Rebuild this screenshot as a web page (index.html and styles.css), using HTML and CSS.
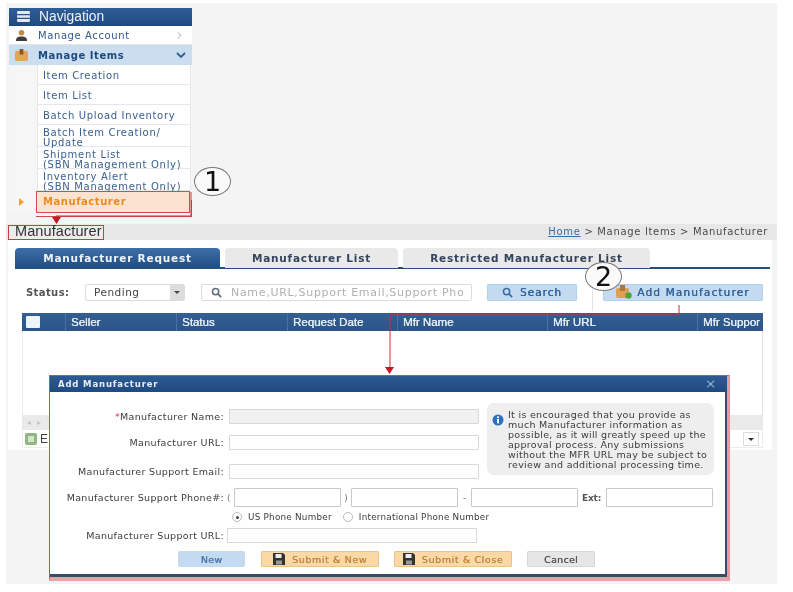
FILE: index.html
```html
<!DOCTYPE html>
<html lang="en">
<head>
<meta charset="utf-8">
<title>Add Manufacturer</title>
<link rel="stylesheet" href="styles.css">
</head>
<body>
<div class="shot">
  <nav class="nav">
    <div class="nav-head">
      <svg class="nav-ico" viewBox="0 0 14 12"><rect width="14" height="12" rx="1" fill="#dfe8f2"/><path d="M0 4h14M0 8h14" stroke="#2b5389" stroke-width="1.2"/></svg>
      <span>Navigation</span>
    </div>
    <div class="nav-top">
      <svg class="top-ico" viewBox="0 0 14 13"><circle cx="7" cy="4" r="3" fill="#c9873f"/><path d="M1 13c0-4 2-5 6-5s6 1 6 5z" fill="#3d3d3d"/></svg>
      <span>Manage Account</span><i class="chev">&#8250;</i>
    </div>
    <div class="nav-top nav-open">
      <svg class="top-ico" viewBox="0 0 14 13"><rect y="2" width="14" height="11" rx="2" fill="#e2a458"/><rect x="5" width="4" height="6" fill="#8a5a22"/></svg>
      <span>Manage Items</span>
      <svg class="chev-down" viewBox="0 0 10 6"><path d="M1 1l4 4 4-4" fill="none" stroke="#315f93" stroke-width="1.8"/></svg>
    </div>
    <ul class="sub">
      <li>Item Creation</li>
      <li>Item List</li>
      <li>Batch Upload Inventory</li>
      <li class="two">Batch Item Creation/<br>Update</li>
      <li class="two">Shipment List<br>(SBN Management Only)</li>
      <li class="two">Inventory Alert<br>(SBN Management Only)</li>
      <li class="current">Manufacturer</li>
    </ul>
  </nav>

  <header class="band">
    <span class="page-title">Manufacturer</span>
    <span class="crumbs"><a>Home</a> &gt; Manage Items &gt; Manufacturer</span>
  </header>

  <main class="panel">
    <div class="tabs">
      <div class="tab tab-on">Manufacturer Request</div>
      <div class="tab tab-list">Manufacturer List</div>
      <div class="tab tab-restricted">Restricted Manufacturer List</div>
    </div>
    <div class="tools">
      <span class="status-label">Status:</span>
      <div class="select"><span>Pending</span><b class="select-arrow"></b></div>
      <div class="search">
        <svg class="glass" viewBox="0 0 12 12"><circle cx="5" cy="5" r="3.4" fill="none" stroke="#5f6d7c" stroke-width="1.7"/><path d="M7.6 7.6L11 11" stroke="#5f6d7c" stroke-width="2"/></svg>
        <span>Name,URL,Support Email,Support Pho</span>
      </div>
      <div class="btn-blue btn-search">
        <svg class="glass" viewBox="0 0 12 12"><circle cx="5" cy="5" r="3.4" fill="none" stroke="#3a6ea5" stroke-width="1.7"/><path d="M7.6 7.6L11 11" stroke="#3a6ea5" stroke-width="2"/></svg>
        <span>Search</span>
      </div>
      <div class="tool-sep"></div>
      <div class="btn-blue btn-add">
        <svg class="add-ico" viewBox="0 0 16 14"><rect y="3" width="13" height="10" rx="2" fill="#dca156"/><rect x="4" width="5" height="6" fill="#a8763a"/><circle cx="12.5" cy="10.5" r="3.2" fill="#4fa03e"/></svg>
        <span>Add Manufacturer</span>
      </div>
    </div>
    <div class="grid">
      <div class="grid-head">
        <div class="col col-check"><b class="check"></b></div>
        <div class="col col-a">Seller</div>
        <div class="col col-a">Status</div>
        <div class="col col-b">Request Date</div>
        <div class="col col-c">Mfr Name</div>
        <div class="col col-c">Mfr URL</div>
        <div class="col col-d">Mfr Suppor</div>
      </div>
      <div class="grid-body"></div>
      <div class="grid-scroll"><span>&#9666;</span><span>&#9656;</span></div>
      <div class="grid-foot">
        <div class="export">
          <svg class="export-ico" viewBox="0 0 12 12"><rect width="12" height="12" rx="2" fill="#8fb77f"/><rect x="3" y="3" width="6" height="6" fill="#d4e4c8"/></svg>
          <span>E</span>
        </div>
        <div class="pager"><b class="pager-arrow"></b></div>
      </div>
    </div>
  </main>

  <section class="modal">
    <div class="modal-head"><span>Add Manufacturer</span><i class="close">&#215;</i></div>
    <div class="modal-body">
      <div class="fields">
        <div class="row row-name"><label class="lbl"><em>*</em>Manufacturer Name:</label><div class="inp inp-wide inp-off"></div></div>
        <div class="row row-url"><label class="lbl">Manufacturer URL:</label><div class="inp inp-wide"></div></div>
        <div class="row row-email"><label class="lbl">Manufacturer Support Email:</label><div class="inp inp-wide"></div></div>
      </div>
      <aside class="info">
        <svg class="info-ico" viewBox="0 0 12 12"><circle cx="6" cy="6" r="5.5" fill="#2f6fc0"/><rect x="5" y="5" width="2" height="4.4" fill="#fff"/><rect x="5" y="2.4" width="2" height="1.7" fill="#fff"/></svg>
        <p>It is encouraged that you provide as much Manufacturer information as possible, as it will greatly speed up the approval process. Any submissions without the MFR URL may be subject to review and additional processing time.</p>
      </aside>
      <div class="row row-phone">
        <label class="lbl">Manufacturer Support Phone#:</label>
        <span class="paren">(</span><div class="inp inp-ph"></div>
        <span class="paren gap-a">)</span><div class="inp inp-ph"></div>
        <span class="paren gap-b">-</span><div class="inp inp-ph"></div>
        <span class="ext">Ext:</span><div class="inp inp-ph"></div>
      </div>
      <div class="radios">
        <b class="radio radio-on"></b><span>US Phone Number</span>
        <b class="radio radio-second"></b><span>International Phone Number</span>
      </div>
      <div class="row row-surl"><label class="lbl">Manufacturer Support URL:</label><div class="inp inp-surl"></div></div>
      <div class="actions">
        <div class="act act-new">New</div>
        <div class="act act-orange"><svg class="disk" viewBox="0 0 12 12"><path d="M0 0h10l2 2v10H0z" fill="#333"/><rect x="2.5" y="1" width="6" height="4" fill="#eee"/><rect x="3" y="7.5" width="6" height="4" fill="#999"/></svg>Submit &amp; New</div>
        <div class="act act-orange"><svg class="disk" viewBox="0 0 12 12"><path d="M0 0h10l2 2v10H0z" fill="#333"/><rect x="2.5" y="1" width="6" height="4" fill="#eee"/><rect x="3" y="7.5" width="6" height="4" fill="#999"/></svg>Submit &amp; Close</div>
        <div class="act act-cancel">Cancel</div>
      </div>
    </div>
  </section>

  <svg class="marks" viewBox="0 0 771 581" aria-hidden="true">
    <path d="M185 189v24H50v6M673 302v10H384v54" fill="none" stroke="#c4303a" stroke-width="1"/>
    <path d="M46 214h9l-4.500 7zM379 364h9l-4.500 7z" fill="#c8171f"/>
  </svg>
  <div class="badge badge-one">1</div>
  <div class="badge badge-two">2</div>
</div>
</body>
</html>
```
FILE: styles.css
```css
* { box-sizing: border-box; }
html, body { margin: 0; padding: 0; background: #fff; }
body { width: 793px; height: 592px; overflow: hidden; font-family: "DejaVu Sans", sans-serif; font-size: 10px; color: #444; }
.shot { position: relative; width: 771px; height: 581px; margin: 3px 0 0 6px; padding-top: 5px; background: #f4f4f4; filter: blur(.6px); }

.nav { width: 183px; height: 216px; margin-left: 3px; }
.nav-head { height: 18px; display: flex; align-items: center; gap: 8px; padding: 0 0 2px 7px; background: linear-gradient(#2f5d96, #1f4a80); color: #eef2f7; font: 13.800px "Liberation Sans", sans-serif; }
.nav-ico { width: 15px; height: 11px; }
.nav-top { height: 19px; display: flex; align-items: center; padding-left: 6px; background: #fff; color: #32598c; letter-spacing: .6px; font-size: 10px; border-bottom: 1px solid #e6e6e6; }
.top-ico { width: 13px; height: 12px; margin-right: 10px; }
.chev { margin-left: auto; margin-right: 9px; color: #c8c8c8; font-size: 15px; font-style: normal; line-height: 10px; }
.nav-open { height: 20px; background: #cbdef0; color: #1e4a80; font-weight: 700; font-size: 10px; letter-spacing: .55px; border: 0; }
.chev-down { width: 10px; height: 6px; margin-left: auto; margin-right: 6px; }
.sub { list-style: none; margin: 0; padding: 0 1px 0 28px; background: #f6f6f6; }
.sub li { height: 20px; display: flex; align-items: center; padding: 2px 0 0 5px; background: #fff; color: #3a6091; letter-spacing: .65px; font-size: 10px; line-height: 10px; border: 1px solid #e4e8ec; border-width: 0 1px 1px; }
.sub li.two { display: block; height: 22px; padding-top: 2.500px; white-space: nowrap; letter-spacing: .7px; }
.sub li.current { height: 22px; margin-left: -1px; margin-right: 1px; padding: 0 0 0 6px; background: #fbe3cf; color: #ef8a1f; font-weight: 700; font-size: 10px; letter-spacing: .55px; border: 1px solid #d6494f; position: relative; }
.sub li.current::before { content: ""; position: absolute; left: -18px; top: 6px; border-left: 5px solid #f0a030; border-top: 4px solid transparent; border-bottom: 4px solid transparent; }
.sub li.current::after { content: ""; position: absolute; left: -1px; right: -3px; top: 8px; height: 16px; border: 1px solid #d6494f; border-width: 0 1px 1px 0; }

.band { height: 16px; display: flex; align-items: center; justify-content: space-between; padding-right: 9px; background: #e7e7e7; width: 771px; }
.page-title { margin-left: 2px; padding: 0 1px 0 6px; height: 15px; border: 1px solid #cf3a44; color: #333; font: 14.500px/11px "Liberation Sans", sans-serif; letter-spacing: .1px; background: #ececec; white-space: nowrap; }
.crumbs { color: #4a4a4a; letter-spacing: .67px; font-size: 10px; margin-top: -1px; }
.crumbs a { color: #3a6c9e; text-decoration: underline; }

.panel { width: 764px; height: 210px; margin-left: 2px; padding: 8px 0 0 7px; background: #fff; }
.tabs { display: flex; gap: 5px; height: 21px; width: 755px; border-bottom: 2px solid #27507f; }
.tab { height: 20px; display: flex; align-items: center; justify-content: center; border-radius: 4px 4px 0 0; background: #e9e9e9; color: #33445c; font-weight: 700; font-size: 10.500px; letter-spacing: .8px; }
.tab-on { width: 205px; background: linear-gradient(#3e6fa6, #1f4d85); color: #f0f4f8; }
.tab-list { width: 173px; }
.tab-restricted { width: 247px; }

.tools { position: relative; height: 46px; display: flex; align-items: center; padding-left: 11px; }
.status-label { width: 59px; font-weight: 700; font-size: 10px; color: #555; letter-spacing: .4px; }
.select { width: 100px; height: 17px; display: flex; align-items: center; justify-content: space-between; padding-left: 8px; border: 1px solid #dcdcdc; border-radius: 2px; font-size: 10.500px; color: #444; letter-spacing: .5px; }
.select-arrow { width: 14px; height: 100%; background: #ddd; position: relative; }
.select-arrow::after { content: ""; position: absolute; left: 4px; top: 6px; border: 3px solid transparent; border-top: 3px solid #444; }
.search { width: 271px; height: 17px; margin-left: 16px; display: flex; align-items: center; gap: 9px; padding-left: 9px; border: 1px solid #dcdcdc; border-radius: 2px; color: #b0b0b0; font-size: 11px; letter-spacing: .7px; white-space: nowrap; overflow: hidden; }
.glass { width: 11px; height: 11px; flex: none; }
.btn-blue { height: 17px; display: flex; align-items: center; justify-content: center; background: #c3daf0; border-radius: 2px; color: #30639a; font-size: 10.500px; box-shadow: inset 0 0 0 1px #b5cfe8; text-shadow: .3px 0 0 #30639a; }
.btn-search { width: 90px; margin-left: 15px; gap: 7px; letter-spacing: 1px; }
.tool-sep { width: 1px; height: 34px; margin: 4px 10px 0 15px; background: #e3e3e3; }
.btn-add { width: 160px; gap: 5px; letter-spacing: 1.150px; }
.add-ico { width: 16px; height: 14px; }

.grid { width: 741px; margin-left: 7px; margin-top: -2px; }
.grid-head { height: 18px; display: flex; background: linear-gradient(#355f93, #2b5488); color: #e4ecf4; font: 11.500px "Liberation Sans", sans-serif; text-shadow: .3px 0 0 #e4ecf4; }
.col { display: flex; align-items: center; padding-left: 5px; border-left: 1px solid #4a72a1; }
.col-check { width: 43px; border: 0; padding-left: 4px; }
.check { width: 14px; height: 12px; background: #eef3f8; border-radius: 1px; }
.col-a { width: 111px; }
.col-b { width: 110px; }
.col-c { width: 150px; }
.col-d { width: 65px; white-space: nowrap; overflow: hidden; }
.grid-body { height: 84px; border-right: 1px solid #e2e2e2; border-left: 1px solid #eee; }
.grid-scroll { height: 15px; display: flex; gap: 6px; padding-left: 5px; align-items: center; background: #eaeaea; color: #c4c4c4; font-size: 8px; }
.grid-foot { height: 18px; display: flex; justify-content: space-between; align-items: center; border: 1px solid #ececec; border-top: 0; padding-right: 3px; }
.export { display: flex; align-items: center; gap: 3px; padding-left: 2px; font: 12px "Liberation Sans", sans-serif; color: #444; }
.export-ico { width: 12px; height: 12px; }
.pager { width: 16px; height: 14px; border: 1px solid #ddd; position: relative; }
.pager-arrow { position: absolute; left: 4px; top: 5px; border: 3px solid transparent; border-top: 3px solid #333; }

.modal { position: absolute; left: 43px; top: 372px; width: 681px; height: 206px; background: #fff; border: 1px solid #cf4a52; border-right-width: 3px; border-right-color: #e89aa0; border-bottom-width: 4px; border-bottom-color: #e9a3a8; box-shadow: inset -2px -3px 0 #3b4a66; }
.modal-head { height: 16px; display: flex; align-items: center; justify-content: space-between; padding: 0 10px 0 8px; background: linear-gradient(#2d5a92, #1f4a80); color: #e8eef5; font-weight: 700; font-size: 8.500px; letter-spacing: .85px; }
.close { font-style: normal; font-size: 13px; font-weight: 400; color: #9fb6d0; line-height: 12px; }
.modal-body { position: relative; padding-top: 17px; }
.row { display: flex; align-items: center; }
.lbl { width: 174px; flex: none; text-align: right; font-size: 9.500px; color: #3c3c3c; letter-spacing: .34px; white-space: nowrap; }
.lbl em { color: #d33; font-style: normal; }
.inp { height: 15px; border: 1px solid #d8d8d8; border-radius: 1px; background: #fff; }
.inp-wide { width: 250px; margin-left: 5px; }
.inp-off { background: #f1f1f1; }
.row-url { margin-top: 11px; }
.row-email { margin-top: 14px; }
.row-phone { margin-top: 9px; }
.row-phone .inp { height: 19px; border-color: #c8c8c8; width: 107px; }
.paren { width: 10px; text-align: center; font-size: 9px; color: #777; }
.row-phone .paren:nth-of-type(1) { width: 10px; text-align: left; padding-left: 3px; }
.gap-b { width: 13px; }
.ext { width: 28px; padding-left: 4px; font-size: 9px; color: #555; font-weight: 700; letter-spacing: -.2px; }
.radios { display: flex; align-items: center; height: 10px; margin-top: 5px; padding-left: 182px; font-size: 8.800px; color: #3c3c3c; letter-spacing: .24px; }
.radio { width: 10px; height: 10px; border: 1px solid #bbb; border-radius: 50%; margin-right: 6px; position: relative; }
.radio-on::after { content: ""; position: absolute; left: 2.500px; top: 2.500px; width: 3px; height: 3px; border-radius: 50%; background: #444; }
.radio-second { margin-left: 11px; }
.row-surl { margin-top: 6px; }
.inp-surl { width: 250px; margin-left: 3px; }
.info { position: absolute; left: 437px; top: 11px; width: 227px; height: 72px; display: flex; gap: 4px; padding: 7px 0 0 5px; background: #eeeeee; border-radius: 7px; }
.info-ico { width: 12px; height: 12px; margin-top: 4px; flex: none; }
.info p { margin: 0; font-size: 9.500px; line-height: 10px; color: #3c3c3c; letter-spacing: .3px; }
.actions { display: flex; margin-top: 8px; padding-left: 128px; }
.act { height: 16px; display: flex; align-items: center; justify-content: center; border-radius: 2px; font-size: 9.500px; letter-spacing: .3px; text-shadow: .3px 0 0 currentColor; }
.act-new { width: 67px; margin-right: 16px; background: #c3daf0; color: #4b77a8; }
.act-orange { width: 118px; margin-right: 15px; gap: 7px; background: #fbd9a6; color: #c08a40; box-shadow: inset 0 0 0 1px #eec283; letter-spacing: .6px; }
.act-cancel { width: 68px; background: #e6e6e6; color: #555; box-shadow: inset 0 0 0 1px #d6d6d6; }
.disk { width: 12px; height: 12px; }

.marks { position: absolute; left: 0; top: 0; width: 771px; height: 581px; pointer-events: none; }
.badge { position: absolute; width: 37px; height: 29px; display: flex; align-items: center; justify-content: center; background: #fafafa; border: 1px solid #777; border-radius: 50%; color: #111; font: 27px/28px "DejaVu Sans", sans-serif; }
.badge-one { left: 188px; top: 164px; }
.badge-two { left: 579px; top: 259px; }
```
